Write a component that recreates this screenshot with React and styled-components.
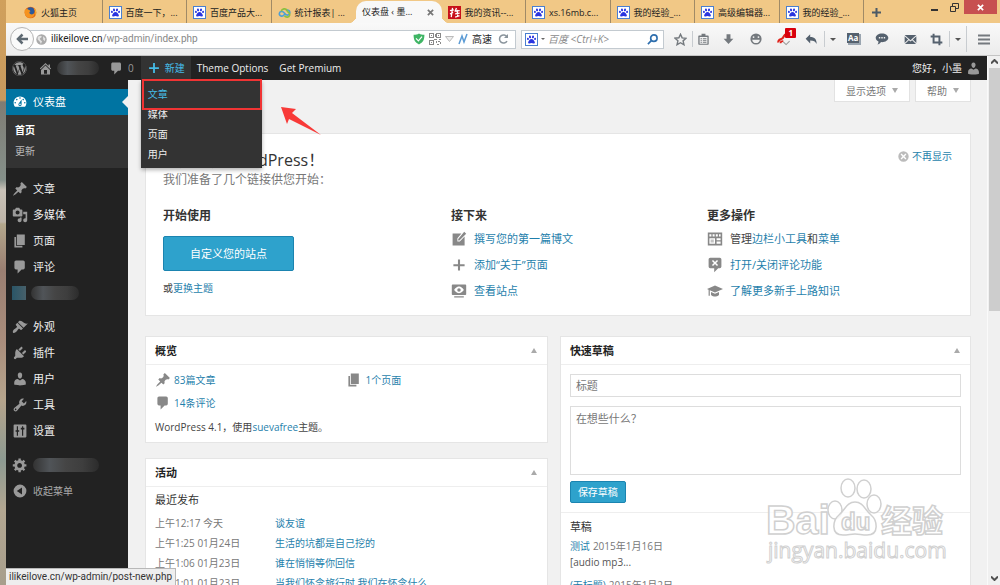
import React from 'react'
import styled, { createGlobalStyle, css } from 'styled-components'
import { FaWordpress, FaPaw } from 'react-icons/fa'

let link = `#1f7fac`
let sans = `'Open Sans', 'Noto Sans CJK SC', sans-serif`
let narrow = `Roboto, 'Noto Sans CJK SC', sans-serif`

let GlobalStyle = createGlobalStyle`
  * { box-sizing: border-box; }
  body {
    margin: 0;
    font: 10px/16px ${sans};
    color: #444;
    background: #f1f1f1;
  }
  h1, h2, h3, p, ul { margin: 0; padding: 0; font-weight: normal; }
  ul { list-style: none; }
  a { color: ${link}; text-decoration: none; }
  button, input, textarea { font: inherit; color: inherit; margin: 0; padding: 0; border: 0; background: none; outline: none; }
  svg { display: block; flex-shrink: 0; }
`

/* ---------- icons ---------- */

let paths = {
  post: `M10.44 3.02l1.82-1.82 6.36 6.35-1.83 1.82c-1.05-.68-2.48-.57-3.41.36l-.75.75c-.92.93-1.04 2.35-.35 3.41l-1.83 1.82-2.41-2.41-2.8 2.79c-.42.42-3.38 2.71-3.8 2.29s1.86-3.39 2.28-3.81l2.79-2.79L4.1 9.36l1.83-1.82c1.05.69 2.48.57 3.4-.36l.75-.75c.93-.92 1.05-2.35.36-3.41z`,
  media: `M13 11V4c0-.55-.45-1-1-1h-1.67L9 1H5L3.67 3H2c-.55 0-1 .45-1 1v7c0 .55.45 1 1 1h10c.55 0 1-.45 1-1zM7 4.5c1.38 0 2.5 1.12 2.5 2.5S8.38 9.5 7 9.5 4.5 8.38 4.5 7 5.62 4.5 7 4.5zM14 6h5v10.5c0 1.38-1.12 2.5-2.5 2.5S14 17.88 14 16.5s1.12-2.5 2.5-2.5c.17 0 .34.02.5.05V9h-3V6zm-4 8.05V13h2v3.5c0 1.38-1.12 2.5-2.5 2.5S7 17.88 7 16.5 8.12 14 9.5 14c.17 0 .34.02.5.05z`,
  page: `M6 15V2h10v13H6zm-1 1h8v2H3V5h2v11z`,
  comment: `M5 2h9c1.1 0 2 .9 2 2v7c0 1.1-.9 2-2 2h-2l-5 5v-5H5c-1.1 0-2-.9-2-2V4c0-1.1.9-2 2-2z`,
  dashboard: `M3.76 16h12.48c1.1-1.37 1.76-3.11 1.76-5 0-4.42-3.58-8-8-8s-8 3.58-8 8c0 1.89.66 3.63 1.76 5zM10 4c.55 0 1 .45 1 1s-.45 1-1 1-1-.45-1-1 .45-1 1-1zM6 6c.55 0 1 .45 1 1s-.45 1-1 1-1-.45-1-1 .45-1 1-1zm8 0c.55 0 1 .45 1 1s-.45 1-1 1-1-.45-1-1 .45-1 1-1zm-5.37 5.55L12 7v6c0 1.1-.9 2-2 2s-2-.9-2-2c0-.57.24-1.08.63-1.45zM4 10c.55 0 1 .45 1 1s-.45 1-1 1-1-.45-1-1 .45-1 1-1zm12 0c.55 0 1 .45 1 1s-.45 1-1 1-1-.45-1-1 .45-1 1-1zm-5 3c0-.55-.45-1-1-1s-1 .45-1 1 .45 1 1 1 1-.45 1-1z`,
  appearance: `M14.48 11.06L7.41 3.99l1.5-1.5c.5-.56 2.3-.47 3.51.32 1.21.8 1.43 1.28 2.91 2.1 1.18.64 2.45 1.26 4.45.85zm-.71.71L6.7 4.7 4.93 6.47c-.39.39-.39 1.02 0 1.41l1.06 1.06c.39.39.39 1.03 0 1.42-.6.6-1.43 1.11-2.21 1.69-.35.26-.7.53-1.01.84C1.43 14.23.4 16.08 1.4 17.07c.99 1 2.84-.03 4.18-1.36.31-.31.58-.66.85-1.02.57-.78 1.08-1.61 1.69-2.21.39-.39 1.02-.39 1.41 0l1.06 1.06c.39.39 1.02.39 1.41 0z`,
  plugins: `M13.11 4.36L9.87 7.6 8 5.73l3.24-3.24c.35-.34 1.05-.2 1.56.32.52.51.66 1.21.31 1.55zm-8 1.77l.91-1.12 9.01 9.01-1.19.84c-.71.71-2.63 1.16-3.82 1.16H6.14L4.9 17.26c-.59.59-1.54.59-2.12 0-.59-.58-.59-1.53 0-2.12l1.24-1.24v-3.88c0-1.13.4-3.19 1.09-3.89zm7.26 3.97l3.24-3.24c.34-.35 1.04-.21 1.55.31.52.51.66 1.21.31 1.55l-3.24 3.25z`,
  users: `M10 9.25c-2.27 0-2.73-3.44-2.73-3.44C7 4.02 7.82 2 9.97 2c2.16 0 2.98 2.02 2.71 3.81 0 0-.41 3.44-2.68 3.44zm0 2.57L12.72 10c2.39 0 4.52 2.33 4.52 4.53v2.49s-3.65 1.13-7.24 1.13c-3.65 0-7.24-1.13-7.24-1.13v-2.49c0-2.25 1.94-4.48 4.47-4.48z`,
  tools: `M16.68 9.77c-1.34 1.34-3.3 1.67-4.95.99l-5.41 6.52c-.99.99-2.59.99-3.58 0s-.99-2.59 0-3.57l6.52-5.42c-.68-1.65-.35-3.61.99-4.95 1.28-1.28 3.12-1.62 4.72-1.06l-2.89 2.89 2.82 2.82 2.86-2.87c.53 1.58.18 3.39-1.08 4.65zM3.81 16.21c.4.39 1.04.39 1.43 0 .4-.4.4-1.04 0-1.43-.39-.4-1.03-.4-1.43 0-.39.39-.39 1.03 0 1.43z`,
  settings: `M3 2h14c.55 0 1 .45 1 1v14c0 .55-.45 1-1 1H3c-.55 0-1-.45-1-1V3c0-.55.45-1 1-1zM6 4v5H4.500v2H6v5h1.500v-5H9V9H7.500V4zM12.500 4v2H11v2h1.500v8H14V8h1.500V6H14V4z`,
  generic: `M18 12h-2.18c-.17.7-.44 1.35-.81 1.93l1.54 1.54-2.1 2.1-1.54-1.54c-.58.36-1.23.63-1.91.79V19H8v-2.18c-.68-.16-1.33-.43-1.91-.79l-1.54 1.54-2.12-2.12 1.54-1.54c-.36-.58-.63-1.23-.79-1.91H1V9.03h2.17c.16-.7.44-1.35.8-1.94L2.43 5.55l2.1-2.1 1.54 1.54c.58-.37 1.24-.64 1.93-.81V2h3v2.18c.68.16 1.33.43 1.91.79l1.54-1.54 2.12 2.12-1.54 1.54c.36.59.64 1.24.8 1.94H18V12zm-8.5 1.5c1.66 0 3-1.34 3-3s-1.34-3-3-3-3 1.34-3 3 1.34 3 3 3z`,
  collapse: `M10 2a8 8 0 1 0 0 16a8 8 0 1 0 0-16zM12.500 5.500v9L6 10z`,
  home: `M16 8.5l1.53 1.53-1.06 1.06L10 4.6l-6.47 6.49-1.06-1.06L10 2.5l4 4v-2h2v4zm-6-2.46l6 5.99V18H4v-5.97zM12 17v-5H8v5h4z`,
  plus: `M17 9v2.500h-5.700V17H8.700v-5.500H3V9h5.700V3h2.600v6z`,
  write: `M2 3h11l-5 6v4h3l6-6v11H2zM16.500 1l2.500 2.500-8.500 8.500H9v-2z`,
  site: `M2 2h16c.55 0 1 .45 1 1v11c0 .55-.45 1-1 1H2c-.55 0-1-.45-1-1V3c0-.55.45-1 1-1zM10 4.500C6.500 4.500 4.500 8 4 8.700c.6.900 2.600 4 6 4s5.400-3.100 6-4c-.5-.7-2.500-4.200-6-4.200zM10 6.500a2.200 2.200 0 1 1 0 4.400a2.200 2.200 0 1 1 0-4.400zM4 16.500h12V18H4z`,
  widgets: `M1 2h18v16H1zM3 4v3h2.500V4zM7 4v3h2.500V4zM11 4v3h2.500V4zM15 4v3h2V4zM3 9v7h7V9zM12 9v2.500h5V9zM12 13v3h5v-3zM4.500 11h4v1h-4zM4.500 13h4v1h-4z`,
  noComment: `M4 1h12c1.100 0 2 .9 2 2v9c0 1.100-.9 2-2 2h-2l-5 5v-5H4c-1.100 0-2-.9-2-2V3c0-1.100.9-2 2-2zM7.500 3.800L6.200 5.100l2.500 2.500-2.500 2.500 1.300 1.300L10 8.900l2.500 2.500 1.300-1.300-2.500-2.500 2.500-2.500-1.300-1.300L10 6.300z`,
  learn: `M10 3L0 7.500l2 1V16h1.500V9.200L10 12l10-4.500zM5 11.200V15c1.500 1.500 3.500 2 5 2s3.500-.5 5-2v-3.800L10 13.500z`,
  dismiss: `M10 2a8 8 0 1 0 0 16a8 8 0 1 0 0-16zM7 5.500L5.500 7l3 3-3 3L7 14.500l3-3 3 3 1.500-1.500-3-3 3-3L13 5.500l-3 3z`,
  download: `M7 2h6v7h4.500L10 17 2.500 9H7z`,
  undo: `M8 2v4c7 0 10 3.500 10 11-2-4-4.500-5.500-10-5.500V16L1 9z`,
  clipboard: `M7 1h6v3h4c.55 0 1 .45 1 1v12c0 .55-.45 1-1 1H3c-.55 0-1-.45-1-1V5c0-.55.45-1 1-1h4zM4 6v10.500h12V6zM5.500 7.500h2v1.500h-2zM9 7.500h5.500V9H9zM5.500 10.500h2V12h-2zM9 10.500h5.500V12H9zM5.500 13.500h2V15h-2zM9 13.500h5.500V15H9z`,
  smile: `M10 2a8 8 0 1 0 0 16a8 8 0 1 0 0-16zM6.500 6a1.300 1.300 0 1 1 0 2.600a1.300 1.300 0 1 1 0-2.600zM13.500 6a1.300 1.300 0 1 1 0 2.600a1.300 1.300 0 1 1 0-2.600zM4.500 11h11c-.5 3-2.500 4.800-5.500 4.800S5 14 4.500 11z`,
  chat: `M10 2c5 0 9 2.700 9 6.300s-4 6.200-9 6.200c-.4 0-1 0-1.500-.1C7.500 16.500 5 18 3.500 18c1-1 1.500-2.500 1.500-4.500C2.500 12.500 1 10.500 1 8.300 1 4.700 5 2 10 2zM5.500 7.200v2h2v-2zM9 7.200v2h2v-2zM12.500 7.200v2h2v-2z`,
  mail: `M1 3h18l-9 8zM1 5l5.500 5L1 15.500zM19 5v10.500L13.500 10zM7.500 11l2.500 2 2.500-2L18.500 17h-17z`,
  crop: `M4 1h3v3h9v9h3v3h-3v3h-3v-3H4V7H1V4h3zM7 7v6h6V7z`,
}

let Icon = ({ name, size = 16 }) => (
  <svg width={size} height={size} viewBox='0 0 20 20' fill='currentColor' fillRule='evenodd' aria-hidden='true'>
    <path d={paths[name]} />
  </svg>
)

let Firefox = () => (
  <svg width='13' height='13' viewBox='0 0 20 20'>
    <circle cx='10' cy='10' r='9' fill='#e2661a' />
    <circle cx='10' cy='8' r='6' fill='#2c5a9c' />
    <path d='M1 6c2 0 3-2 4-2 0 2 4 2 5 4-2 1-2 2-1 4 3 2 6 1 7-2 1 5-3 9-8 8C3 18 0 12 1 6z' fill='#f59320' />
    <path d='M15 3c4 3 5 9 2 13 1-4 1-8-2-13z' fill='#f9c42e' />
  </svg>
)

let Rings = () => (
  <svg width='13' height='13' viewBox='0 0 20 20' fill='none' strokeWidth='2.5'>
    <path d='M10 13c-2 4-8 3-8-1s5-5 8-1 7 4 8 0-3-6-6-4' stroke='#4d9fd6' />
    <path d='M5 8c1-4 7-5 9-1s5 3 4 7-6 4-8 1' stroke='#8bbf3f' />
  </svg>
)

let RedSquare = () => (
  <svg width='13' height='13' viewBox='0 0 20 20'>
    <rect width='20' height='20' fill='#c8101a' />
    <path d='M7 3L5 17M3 7l6-1M3 12l5-2M13 3l-2 5M10 8l8-1M14 6l1 10M11 12l7-1M11 17l7-2' stroke='#fff' strokeWidth='2' fill='none' />
  </svg>
)

let PawBox = styled.span`
  display: grid;
  place-items: center;
  flex-shrink: 0;
  width: 13px;
  height: 13px;
  border: 1px solid #4a7fd0;
  background: #fff;
  color: #2a35e0;
`

let Paw = () => <PawBox><FaPaw size={9} /></PawBox>

/* ---------- browser chrome ---------- */

let Screen = styled.div`
  display: flex;
  height: 100vh;
  overflow: hidden;
`

let Desktop = styled.div`
  width: 6px;
  background: linear-gradient(#d0a05c 0, #c89a5e 100px, #7f7c74 102px, #85908a 180px, #c9c2b8 190px, #bdb4a8 222px, #b3a78c 224px, #9a7f72 270px, #a98d7c 340px, #b5a48c 400px, #8d9a92 460px, #b3a792 510px, #a79e8c 100%);
`

let Browser = styled.div`
  position: relative;
  display: flex;
  flex-direction: column;
  flex: 1;
  min-width: 0;
`

let TabBar = styled.div`
  display: flex;
  height: 23px;
  padding-left: 12px;
  background: #f1c886;
  color: #222;
`

let Tabs = styled.div`
  display: flex;
  flex: 1;
  min-width: 0;
`

let Tab = styled.button`
  position: relative;
  display: flex;
  align-items: center;
  gap: 4px;
  flex: 1 1 0;
  min-width: 0;
  padding: 2px 6px 0;
  border-right: 1px solid ${p => p.$plain ? `transparent` : `#a08a66`};
  font-size: 9px;
  text-align: left;
  white-space: nowrap;

  ${p => p.$active && css`
    justify-content: space-between;
    margin-top: 1px;
    padding: 0 8px 0 6px;
    border: 0;
    border-radius: 10px 10px 0 0;
    background: #f8f8f8;

    &::before, &::after {
      content: '';
      position: absolute;
      bottom: 0;
      width: 8px;
      height: 10px;
    }
    &::before {
      left: -7px;
      background: radial-gradient(ellipse at 0 0, transparent 70%, #f8f8f8 72%);
    }
    &::after {
      right: -7px;
      background: radial-gradient(ellipse at 100% 0, transparent 70%, #f8f8f8 72%);
    }
  `}
`

let WindowButtons = styled.div`
  display: flex;
  width: 136px;
  justify-content: flex-end;
  align-items: flex-start;
  padding-right: 3px;
`

let NewTab = styled.button`
  align-self: center;
  margin-right: auto;
  padding: 2px 8px 0;
  color: #4c5a66;
`

let WindowButton = styled.button`
  display: grid;
  place-items: center;
  width: ${p => p.$close ? 33 : 20}px;
  height: 14px;
  background: ${p => p.$close ? `#c75050` : `none`};
  color: ${p => p.$close ? `#fff` : `#333`};
`

let NavBar = styled.div`
  display: flex;
  align-items: center;
  height: 33px;
  padding-left: 4px;
  border-bottom: 1px solid #c4c4c4;
  background: linear-gradient(#f9f9f9, #ececec);
  color: #6b747c;
`

let Back = styled.button`
  position: relative;
  display: grid;
  place-items: center;
  flex-shrink: 0;
  width: 24px;
  height: 24px;
  margin-right: -6px;
  border: 1px solid #b5b5b5;
  border-radius: 50%;
  background: #fafafa;
  color: #5f6a73;
`

let Field = styled.label`
  display: flex;
  align-items: center;
  gap: ${p => p.$gap || 4}px;
  flex: ${p => p.$grow || `0 0 143px`};
  min-width: 0;
  height: 19px;
  margin-right: 5px;
  padding: 0 5px 0 ${p => p.$grow ? 7 : 3}px;
  border: 1px solid #c3cad0;
  background: #fff;
  font-size: 10px;
  color: #222;
`

let Host = styled.span`
  font-family: ${narrow};
  color: #222;
`

let FieldInput = styled.input`
  flex: 1;
  min-width: 0;
  margin-left: ${p => p.$tight ? -4 : 0}px;
  font-family: ${p => p.$tight ? narrow : sans};
  color: #888;

  &::placeholder {
    color: #8a8a8a;
    font-style: italic;
    opacity: 1;
  }
`

let ToolButton = styled.button`
  position: relative;
  display: grid;
  place-items: center;
  flex-shrink: 0;
  width: ${p => p.$w || 28}px;
  height: ${p => p.$tall ? 26 : 16}px;
  border-left: ${p => p.$line ? `1px solid #c8ccd0` : 0};
  color: ${p => p.$dark ? `#55616e` : `#74797e`};
`

let Badge = styled.span`
  position: absolute;
  top: -3px;
  right: 2px;
  padding: 0 3px;
  border-radius: 1px;
  background: #d8000c;
  color: #fff;
  font-size: 8px;
  font-weight: bold;
  line-height: 10px;
`

let Caret = styled.span`
  width: 0;
  border: ${p => p.$size || 3}px solid transparent;
  ${p => p.$up
    ? css`border-top: 0; border-bottom: 5px solid #aaa;`
    : css`border-bottom: 0; border-top: ${p.$tall ? 5 : p.$size || 3}px solid ${p.$color || `#555`};`}
`

let Viewport = styled.div`
  display: flex;
  flex: 1;
  min-height: 0;
`

let Scrollbar = styled.div`
  display: flex;
  flex-direction: column;
  align-items: center;
  width: 13px;
  border-left: 1px solid #fafafa;
  background: #f0f0f0;
  color: #505050;
`

let Thumb = styled.div`
  flex: 0 0 46%;
  width: 11px;
  margin-bottom: auto;
  background: #cdcdcd;
`

let ScrollArrow = styled.svg`
  margin: 3px 0 4px;
`

let Status = styled.div`
  position: absolute;
  left: 0;
  bottom: 0;
  z-index: 5;
  padding: 0 3px;
  border: 1px solid #b8b8b8;
  border-width: 1px 1px 0 0;
  background: #eee;
  font-family: ${narrow};
  color: #333;
`

/* ---------- wordpress admin ---------- */

let Admin = styled.div`
  display: flex;
  flex-direction: column;
  flex: 1;
  min-width: 0;
`

let AdminBar = styled.div`
  position: relative;
  z-index: 3;
  display: flex;
  height: 24px;
  padding-left: 5px;
  background: #222;
  color: #eee;
`

let BarItem = styled.div`
  position: relative;
  display: flex;
  align-items: center;
  gap: 4px;
  padding: 0 ${p => p.$pad ?? 6}px;
  margin-left: ${p => p.$right ? `auto` : 0};
  background: ${p => p.$open ? `#333` : `none`};
  color: ${p => p.$open ? `#45bbe6` : `#eee`};

  > a {
    color: inherit;
  }
  svg {
    color: ${p => p.$open ? `#45bbe6` : `#999`};
  }
`

let Count = styled.span`
  margin-right: 7px;
  color: #999;
`

let Blob = styled.span`
  width: ${p => p.$w || 48}px;
  height: 14px;
  border-radius: 7px;
  background: linear-gradient(90deg, #333 0, #505458 25%, #454545 50%, #3e3e3e 75%, #2c2c2c);
`

let Dropdown = styled.ul`
  position: absolute;
  top: 24px;
  left: 0;
  width: 121px;
  padding: 4px 7px;
  background: #333;
  box-shadow: 0 2px 4px rgba(0, 0, 0, .3);

  a {
    display: block;
    line-height: 20px;
    color: #eee;
  }
  li:first-child a {
    color: #45bbe6;
  }
`

let Highlight = styled.div`
  position: absolute;
  top: -1px;
  left: 1px;
  right: 0;
  height: 31px;
  border: 2px solid #f03434;
`

let Pointer = styled.svg`
  position: absolute;
  top: 26px;
  left: 139px;
`

let Main = styled.div`
  display: flex;
  flex: 1;
  min-height: 0;
`

let Sidebar = styled.nav`
  flex: 0 0 122px;
  padding-top: 9px;
  background: #222;
  font-size: 11px;
`

let MenuItem = styled.a`
  position: relative;
  display: flex;
  align-items: center;
  gap: 5px;
  height: 26px;
  margin-top: ${p => p.$first ? 8 : 0}px;
  padding-left: 6px;
  color: ${p => p.$dim ? `#aaa` : `#eee`};
  font-size: ${p => p.$dim ? 10 : 11}px;

  svg {
    color: #999;
  }

  ${p => p.$active && css`
    background: #0074a2;
    color: #fff;

    svg {
      color: #fff;
    }
    &::after {
      content: '';
      position: absolute;
      right: 0;
      border: 6px solid transparent;
      border-left: 0;
      border-right-color: #f1f1f1;
    }
  `}
`

let Submenu = styled.ul`
  padding: 5px 9px 6px;
  background: #333;
  font-size: 10px;
  line-height: 21px;

  a {
    color: #bbb;
  }
  li:first-child a {
    color: #fff;
    font-weight: bold;
  }
`

let BlueBlob = styled.span`
  width: 14px;
  height: 14px;
  background: linear-gradient(90deg, #2a5567, #47606a);
`

let Content = styled.main`
  flex: 1;
  min-width: 0;
  padding: 0 16px 0 17px;
  background: #f1f1f1;
`

let ScreenMeta = styled.div`
  display: flex;
  justify-content: flex-end;
  gap: 5px;
  margin-bottom: 31px;
`

let MetaButton = styled.button`
  display: flex;
  align-items: center;
  gap: 6px;
  height: 22px;
  padding: 0 11px;
  border: 1px solid #e2e2e2;
  border-top: 0;
  background: #fff;
  color: #777;
`

let Panel = styled.section`
  position: relative;
  border: 1px solid #e5e5e5;
  background: #fff;
`

let Welcome = styled(Panel)`
  margin-bottom: 20px;
  padding: 16px 7px 11px 17px;
`

let WelcomeTitle = styled.h1`
  font-size: 16px;
  line-height: 20px;
  color: #333;
`

let About = styled.p`
  margin-bottom: 16px;
  font-size: 12px;
  line-height: 20px;
  color: #777;
`

let Dismiss = styled.a`
  position: absolute;
  top: 14px;
  right: 18px;
  display: flex;
  align-items: center;
  gap: 2px;

  svg {
    color: #bbb;
  }
`

let Columns = styled.div`
  display: grid;
  grid-template-columns: 36fr 32fr 32fr;
`

let ColumnTitle = styled.h3`
  font-size: 12px;
  font-weight: bold;
  line-height: 20px;
  color: #333;
`

let BigButton = styled.button`
  display: block;
  height: 35px;
  margin: 10px 0 9px;
  padding: 0 26px;
  border: 1px solid #1b84b0;
  border-radius: 2px;
  background: #2ea2cc;
  color: #fff;
  font-size: 11px;
`

let ActionRow = styled.li`
  display: flex;
  align-items: center;
  gap: 7px;
  height: 26px;
  font-size: 11px;
  color: #444;

  svg {
    color: #888;
  }
`

let Boxes = styled.div`
  display: grid;
  grid-template-columns: 49fr 50fr;
  align-items: start;
  gap: 12px;
`

let Stack = styled.div`
  display: flex;
  flex-direction: column;
  gap: 15px;
`

let BoxHead = styled.header`
  display: flex;
  align-items: center;
  justify-content: space-between;
  height: 28px;
  padding: 0 10px 0 9px;
  border-bottom: 1px solid #eee;
`

let BoxTitle = styled.h2`
  font-size: 11px;
  font-weight: bold;
  color: #222;
`

let BoxBody = styled.div`
  padding: ${p => p.$pad || `3px 9px`};
`

let Glance = styled.ul`
  display: grid;
  grid-template-columns: 1fr 1fr;

  li {
    display: flex;
    align-items: center;
    gap: 3px;
    height: 23px;
  }
  svg {
    color: #888;
  }
`

let Version = styled.p`
  padding: 5px 0 4px;
`

let SubTitle = styled.h3`
  margin-bottom: ${p => p.$gap || 3}px;
  font-size: 11px;
  line-height: 20px;
  color: #333;
`

let Activity = styled.li`
  display: grid;
  grid-template-columns: 120px 1fr;
  line-height: 20px;
  color: #777;
  white-space: nowrap;
`

let TextField = styled.input`
  display: block;
  width: 100%;
  height: 23px;
  padding: 0 5px;
  border: 1px solid #ddd;
  font-size: 11px;

  &::placeholder { color: #777; opacity: 1; }
`

let TextArea = styled.textarea`
  display: block;
  width: 100%;
  height: 69px;
  margin: 9px 0 6px;
  padding: 4px 5px;
  border: 1px solid #ddd;
  font-size: 11px;
  resize: none;

  &::placeholder { color: #777; opacity: 1; }
`

let SaveButton = styled.button`
  height: 22px;
  padding: 0 7px;
  border: 1px solid #1b84b0;
  border-radius: 2px;
  background: #2ea2cc;
  color: #fff;
`

let Drafts = styled.div`
  padding: 4px 9px;
  border-top: 1px solid #eee;
  color: #555;
`

let Draft = styled.div`
  margin-bottom: 7px;
  white-space: nowrap;
`

let Time = styled.span`
  margin-left: 3px;
  color: #777;
`

let Watermark = styled.svg`
  position: absolute;
  right: 48px;
  bottom: 18px;
  z-index: 4;
  pointer-events: none;
`

let tabs = [
  { icon: <Firefox />, text: `火狐主页` },
  { icon: <Paw />, text: `百度一下，...` },
  { icon: <Paw />, text: `百度产品大...` },
  { icon: <Rings />, text: `统计报表| ...`, plain: true },
  { text: `仪表盘 ‹ 墨...`, active: true },
  { icon: <RedSquare />, text: `我的资讯--...` },
  { icon: <Paw />, text: `xs.16mb.c...` },
  { icon: <Paw />, text: `我的经验_...` },
  { icon: <Paw />, text: `高级编辑器...` },
  { icon: <Paw />, text: `我的经验_...` },
]

let menu = [
  { icon: `post`, text: `文章`, first: true },
  { icon: `media`, text: `多媒体` },
  { icon: `page`, text: `页面` },
  { icon: `comment`, text: `评论` },
  { hidden: true },
  { icon: `appearance`, text: `外观`, first: true },
  { icon: `plugins`, text: `插件` },
  { icon: `users`, text: `用户` },
  { icon: `tools`, text: `工具` },
  { icon: `settings`, text: `设置` },
]

let activity = [
  [`上午12:17 今天`, `谈友谊`],
  [`上午1:25 01月24日`, `生活的坑都是自己挖的`],
  [`上午1:06 01月23日`, `谁在悄悄等你回信`],
  [`上午1:01 01月23日`, `当我们怀念旅行时,我们在怀念什么`],
]

let Box = ({ title, children }) => (
  <Panel>
    <BoxHead>
      <BoxTitle>{title}</BoxTitle>
      <button aria-label={`切换 ${title}`}><Caret as='i' $up style={{ display: `block` }} /></button>
    </BoxHead>
    {children}
  </Panel>
)

let BrowserTabs = () => (
  <TabBar>
    <Tabs>
      {tabs.map((t, i) => (
        <Tab key={i} $active={t.active} $plain={t.plain}>
          {t.icon}
          <span>{t.text}</span>
          {t.active && (
            <svg width='7' height='7' viewBox='0 0 8 8' stroke='#777' strokeWidth='2'><path d='M1 1l6 6M7 1L1 7' /></svg>
          )}
        </Tab>
      ))}
    </Tabs>
    <WindowButtons>
      <NewTab aria-label='新标签页'>
        <svg width='9' height='9' viewBox='0 0 9 9' stroke='currentColor' strokeWidth='2'><path d='M4.500 0v9M0 4.500h9' /></svg>
      </NewTab>
      <WindowButton aria-label='最小化'>
        <svg width='7' height='8' viewBox='0 0 7 8' stroke='currentColor' strokeWidth='2'><path d='M0 7h7' /></svg>
      </WindowButton>
      <WindowButton aria-label='还原'>
        <svg width='9' height='9' viewBox='0 0 9 9' stroke='currentColor' fill='none'><path d='M.5 3.500h5v5h-5zM2.500 3V.5h6v5H6' /></svg>
      </WindowButton>
      <WindowButton $close aria-label='关闭'>
        <svg width='7' height='7' viewBox='0 0 8 8' stroke='currentColor' strokeWidth='2'><path d='M1 1l6 6M7 1L1 7' /></svg>
      </WindowButton>
    </WindowButtons>
  </TabBar>
)

let Navigation = () => (
  <NavBar>
    <Back aria-label='后退'>
      <svg width='12' height='12' viewBox='0 0 12 12' fill='none' stroke='currentColor' strokeWidth='2.500'><path d='M12 6H2M6.500 1.500L2 6l4.500 4.500' /></svg>
    </Back>
    <Field $grow='1'>
      <svg width='11' height='11' viewBox='0 0 20 20'>
        <circle cx='10' cy='10' r='9.500' fill='#aaa' />
        <path d='M3 5l5-2 3 2-4 3 1 3 3 2-2 5-2-4-4-4zM13 4l4 4-1 5-3-3z' fill='#e4e4e4' />
      </svg>
      <Host>ilikeilove.cn</Host>
      <FieldInput $tight aria-label='网址' defaultValue='/wp-admin/index.php' />
      <svg width='12' height='12' viewBox='0 0 20 20'>
        <path d='M1 3c4 0 6 0 9-2 3 2 5 2 9 2 0 8-2 13-9 16C3 16 1 11 1 3z' fill='#3fb565' />
        <path d='M5 9l4 4 6-7' fill='none' stroke='#fff' strokeWidth='2' />
      </svg>
      <svg width='12' height='12' viewBox='0 0 12 12' fill='none' stroke='#888' shapeRendering='crispEdges'>
        <path d='M.5.5h4v4h-4zM7.500.5h4v4h-4zM.5 7.500h4v4h-4zM2 2.500h1M9 2.500h1M2 9.500h1M6 1v3M5 6.500h3M10 6.500h2M7.500 8v2M9 8.500h2M8 11.500h2M11.500 9v2' />
      </svg>
      <svg width='9' height='6' viewBox='0 0 9 6'><path d='M.5.5h8l-4 5z' fill='#eee' stroke='#bbb' /></svg>
      <svg width='10' height='12' viewBox='0 0 10 12' fill='none' stroke='#5b9bd5' strokeWidth='1.500'><path d='M1 11l3-8 2 6 3-8' /></svg>
      <span>高速</span>
      <svg width='14' height='12' viewBox='0 0 14 12' fill='none' stroke='#8a949c' strokeWidth='1.500'><path d='M11 4A4 4 0 1 0 11 8' /><path d='M12 1v4H8z' fill='#8a949c' stroke='none' /></svg>
    </Field>
    <Field $gap={3}>
      <Paw />
      <Caret $size={2} $color='#666' />
      <FieldInput placeholder='百度 <Ctrl+K>' aria-label='搜索' />
      <svg width='11' height='11' viewBox='0 0 12 12' fill='none' stroke='#2f6fae' strokeWidth='1.800'><circle cx='7.500' cy='4.500' r='3.500' /><path d='M5 7l-4 4' /></svg>
    </Field>
    <ToolButton $w={23} aria-label='收藏'>
      <svg width='13' height='13' viewBox='0 0 20 20' fill='none' stroke='currentColor' strokeWidth='2.200'><path d='M10 2l2.500 5.500 6 .6-4.500 4 1.300 6L10 15l-5.300 3 1.300-6-4.500-4 6-.6z' /></svg>
    </ToolButton>
    <ToolButton $w={22} $line aria-label='书签'><Icon name='clipboard' size={13} /></ToolButton>
    <ToolButton aria-label='下载'><Icon name='download' size={13} /></ToolButton>
    <ToolButton aria-label='表情'><Icon name='smile' size={14} /></ToolButton>
    <ToolButton aria-label='通知'>
      <svg width='14' height='14' viewBox='0 0 20 20' fill='none'>
        <path d='M2 15c-1-5 4-4 6-6s1-5 6-6' stroke='#e0231c' strokeWidth='3' />
        <path d='M5 16c0-3 2-3 4-3' stroke='#e0231c' strokeWidth='2.500' />
        <path d='M9 14l4 4 5-5' stroke='#999' strokeWidth='1.500' />
      </svg>
      <Badge>1</Badge>
    </ToolButton>
    <ToolButton $w={26} $dark aria-label='撤销'><Icon name='undo' size={13} /></ToolButton>
    <ToolButton $w={16} $line aria-label='更多'><Caret /></ToolButton>
    <ToolButton $dark aria-label='词典'>
      <svg width='14' height='12' viewBox='0 0 14 12'>
        <rect x='1' y='1' width='13' height='11' fill='#9aa5b0' />
        <rect width='12' height='10' fill='currentColor' />
        <text x='1' y='8' fill='#fff' fontSize='8' fontWeight='bold' fontFamily='Open Sans'>Aa</text>
      </svg>
    </ToolButton>
    <ToolButton $dark aria-label='聊天'><Icon name='chat' size={14} /></ToolButton>
    <ToolButton $dark aria-label='邮件'><Icon name='mail' size={13} /></ToolButton>
    <ToolButton $w={25} $dark aria-label='截图'><Icon name='crop' size={13} /></ToolButton>
    <ToolButton $w={17} $line aria-label='截图选项'><Caret /></ToolButton>
    <ToolButton $w={34} $line $tall aria-label='菜单'>
      <svg width='12' height='11' viewBox='0 0 12 11' stroke='currentColor' strokeWidth='2'><path d='M0 1.500h12M0 5.500h12M0 9.500h12' /></svg>
    </ToolButton>
  </NavBar>
)

let TopBar = () => (
  <AdminBar>
    <BarItem $pad={1}><a href='#wp' aria-label='WordPress'><FaWordpress size={15} /></a></BarItem>
    <BarItem $pad={10}>
      <a href='#home' aria-label='站点'><Icon name='home' size={15} /></a>
      <Blob $w={42} />
    </BarItem>
    <BarItem $pad={0}>
      <Icon name='comment' size={15} />
      <Count>0</Count>
    </BarItem>
    <BarItem $open>
      <Icon name='plus' size={14} />
      <a href='#new'>新建</a>
      <Dropdown>
        <li><a href='#post'>文章</a></li>
        <li><a href='#media'>媒体</a></li>
        <li><a href='#page'>页面</a></li>
        <li><a href='#user'>用户</a></li>
        <Highlight as='li' aria-hidden='true' />
        <li aria-hidden='true'>
          <Pointer width='44' height='32' viewBox='0 0 44 32' fill='#f83a38'>
            <path d='M1 1l15 2-4 4 29 22-32-16-2 5z' />
          </Pointer>
        </li>
      </Dropdown>
    </BarItem>
    <BarItem><a href='#theme'>Theme Options</a></BarItem>
    <BarItem $pad={5}><a href='#premium'>Get Premium</a></BarItem>
    <BarItem $right>
      <a href='#me'>您好，小墨</a>
      <Icon name='users' size={15} />
    </BarItem>
  </AdminBar>
)

let SideMenu = () => (
  <Sidebar>
    <MenuItem href='#dashboard' $active><Icon name='dashboard' />仪表盘</MenuItem>
    <Submenu>
      <li><a href='#index'>首页</a></li>
      <li><a href='#update'>更新</a></li>
    </Submenu>
    {menu.map((m, i) => m.hidden ? (
      <MenuItem as='div' key={i}><BlueBlob /><Blob /></MenuItem>
    ) : (
      <MenuItem href={`#${m.icon}`} key={i} $first={m.first}><Icon name={m.icon} />{m.text}</MenuItem>
    ))}
    <MenuItem as='div' $first><Icon name='generic' /><Blob $w={66} /></MenuItem>
    <MenuItem href='#collapse' $dim><Icon name='collapse' />收起菜单</MenuItem>
  </Sidebar>
)

let WelcomePanel = () => (
  <Welcome>
    <WelcomeTitle>欢迎使用WordPress！</WelcomeTitle>
    <About>我们准备了几个链接供您开始：</About>
    <Dismiss href='#dismiss'><Icon name='dismiss' size={13} />不再显示</Dismiss>
    <Columns>
      <div>
        <ColumnTitle>开始使用</ColumnTitle>
        <BigButton>自定义您的站点</BigButton>
        <p>或<a href='#themes'>更换主题</a></p>
      </div>
      <div>
        <ColumnTitle>接下来</ColumnTitle>
        <ul>
          <ActionRow><Icon name='write' /><a href='#write'>撰写您的第一篇博文</a></ActionRow>
          <ActionRow><Icon name='plus' /><a href='#about'>添加“关于”页面</a></ActionRow>
          <ActionRow><Icon name='site' /><a href='#site'>查看站点</a></ActionRow>
        </ul>
      </div>
      <div>
        <ColumnTitle>更多操作</ColumnTitle>
        <ul>
          <ActionRow><Icon name='widgets' /><span>管理<a href='#widgets'>边栏小工具</a>和<a href='#menus'>菜单</a></span></ActionRow>
          <ActionRow><Icon name='noComment' /><a href='#comments'>打开/关闭评论功能</a></ActionRow>
          <ActionRow><Icon name='learn' /><a href='#learn'>了解更多新手上路知识</a></ActionRow>
        </ul>
      </div>
    </Columns>
  </Welcome>
)

let Dashboard = () => (
  <Content>
    <ScreenMeta>
      <MetaButton>显示选项 <Caret $tall $color='#aaa' /></MetaButton>
      <MetaButton>帮助 <Caret $tall $color='#aaa' /></MetaButton>
    </ScreenMeta>
    <WelcomePanel />
    <Boxes>
      <Stack>
        <Box title='概览'>
          <BoxBody>
            <Glance>
              <li><Icon name='post' /><a href='#posts'>83篇文章</a></li>
              <li><Icon name='page' /><a href='#pages'>1个页面</a></li>
              <li><Icon name='comment' /><a href='#replies'>14条评论</a></li>
            </Glance>
            <Version>WordPress 4.1，使用<a href='#suevafree'>suevafree</a>主题。</Version>
          </BoxBody>
        </Box>
        <Box title='活动'>
          <BoxBody>
            <SubTitle>最近发布</SubTitle>
            <ul>
              {activity.map(([time, title]) => (
                <Activity key={time}><span>{time}</span><a href='#edit'>{title}</a></Activity>
              ))}
            </ul>
          </BoxBody>
        </Box>
      </Stack>
      <Box title='快速草稿'>
        <BoxBody $pad='9px'>
          <TextField placeholder='标题' aria-label='标题' />
          <TextArea placeholder='在想些什么？' aria-label='在想些什么？' />
          <SaveButton>保存草稿</SaveButton>
        </BoxBody>
        <Drafts>
          <SubTitle $gap={1}>草稿</SubTitle>
          <Draft><a href='#draft1'>测试</a><Time>2015年1月16日</Time><p>[audio mp3...</p></Draft>
          <Draft><a href='#draft2'>(无标题)</a><Time>2015年1月2日</Time></Draft>
        </Drafts>
      </Box>
    </Boxes>
  </Content>
)

let BaiduMark = () => (
  <Watermark width='188' height='92' viewBox='0 0 188 92' fill='#fff' fillOpacity='.8' stroke='#d0d0d0' strokeWidth='1.500'>
    <text x='2' y='59' fontFamily='Liberation Sans' fontWeight='bold' fontSize='41'>Bai</text>
    <ellipse cx='71' cy='35' rx='7' ry='9' />
    <ellipse cx='84' cy='13' rx='7' ry='9' />
    <ellipse cx='100' cy='14' rx='7' ry='9' />
    <ellipse cx='110' cy='29' rx='7' ry='9' />
    <path d='M91 27c-8 0-10 8-16 13s-9 20 4 20c5 0 8-1 12-1s7 1 12 1c13 0 10-15 4-20s-8-13-16-13z' />
    <text x='77' y='55' fontFamily='Liberation Sans' fontWeight='bold' fontSize='24'>du</text>
    <text x='117' y='57' fontFamily='Noto Sans CJK SC' fontWeight='bold' fontSize='31'>经验</text>
    <text x='4' y='83' fontFamily='Open Sans' fontSize='21' strokeWidth='1'>jingyan.baidu.com</text>
  </Watermark>
)

let App = () => (
  <Screen>
    <GlobalStyle />
    <Desktop />
    <Browser>
      <BrowserTabs />
      <Navigation />
      <Viewport>
        <Admin>
          <TopBar />
          <Main>
            <SideMenu />
            <Dashboard />
          </Main>
        </Admin>
        <Scrollbar>
          <ScrollArrow width='7' height='5' viewBox='0 0 7 5' fill='none' stroke='currentColor' strokeWidth='2'><path d='M0 4.500l3.500-3.500L7 4.500' /></ScrollArrow>
          <Thumb />
          <ScrollArrow width='7' height='5' viewBox='0 0 7 5' fill='none' stroke='currentColor' strokeWidth='2'><path d='M0 .5l3.500 3.500L7 .5' /></ScrollArrow>
        </Scrollbar>
      </Viewport>
      <Status>ilikeilove.cn/wp-admin/post-new.php</Status>
      <BaiduMark />
    </Browser>
  </Screen>
)

export default App
